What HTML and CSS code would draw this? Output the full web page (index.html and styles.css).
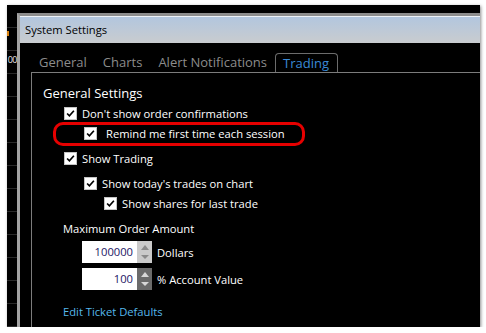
FILE: index.html
```html
<!DOCTYPE html>
<html lang="en">
<head>
    <meta charset="UTF-8">
    <title>System Settings</title>
    <link rel="stylesheet" href="styles.css">
</head>
<body>
    <div class="shot">
        <div class="app">
            <span class="app-mark"></span>
            <span class="app-num">00</span>
        </div>
        <div class="dialog">
            <div class="titlebar">System Settings</div>
            <div class="dialog-body">
                <div class="tabs">
                    <span class="tab">General</span>
                    <span class="tab">Charts</span>
                    <span class="tab">Alert Notifications</span>
                    <span class="tab active">Trading</span>
                </div>
                <div class="pane">
                    <div class="heading">General Settings</div>

                    <div class="row lvl0">
                        <span class="cb"><svg viewBox="0 0 13 13"><path d="M2.5 6.5 L5.2 9.2 L10.5 3.2"/></svg></span>
                        <span>Don't show order confirmations</span>
                    </div>
                    <div class="row lvl1 remind">
                        <span class="cb"><svg viewBox="0 0 13 13"><path d="M2.5 6.5 L5.2 9.2 L10.5 3.2"/></svg></span>
                        <span>Remind me first time each session</span>
                    </div>
                    <div class="row lvl0 gap">
                        <span class="cb"><svg viewBox="0 0 13 13"><path d="M2.5 6.5 L5.2 9.2 L10.5 3.2"/></svg></span>
                        <span>Show Trading</span>
                    </div>
                    <div class="row lvl1 gap">
                        <span class="cb"><svg viewBox="0 0 13 13"><path d="M2.5 6.5 L5.2 9.2 L10.5 3.2"/></svg></span>
                        <span>Show today's trades on chart</span>
                    </div>
                    <div class="row lvl2">
                        <span class="cb"><svg viewBox="0 0 13 13"><path d="M2.5 6.5 L5.2 9.2 L10.5 3.2"/></svg></span>
                        <span>Show shares for last trade</span>
                    </div>

                    <div class="label">Maximum Order Amount</div>
                    <div class="amount">
                        <span class="num-input">100000</span>
                        <span class="spin">
                            <span class="up"></span>
                            <span class="down"></span>
                        </span>
                        <span>Dollars</span>
                    </div>
                    <div class="amount second">
                        <span class="num-input">100</span>
                        <span class="spin dark">
                            <span class="up"></span>
                            <span class="down"></span>
                        </span>
                        <span>% Account Value</span>
                    </div>

                    <div class="link">Edit Ticket Defaults</div>
                </div>
            </div>
        </div>
    </div>
</body>
</html>
```

FILE: styles.css
```css
body {
    margin: 0;
    background: #fff;
    font-family: 'Open Sans', 'Noto Sans', sans-serif;
}
.shot {
    display: flex;
    width: 473px;
    height: 322px;
    margin: 5px 0 0 7px;
    background: #000;
    overflow: hidden;
    box-shadow: 1px 1px 3px rgba(0,0,0,0.45);
}

/* chart window behind the dialog */
.app {
    width: 10px;
    flex-shrink: 0;
    display: flex;
    flex-direction: column;
    align-items: flex-end;
    overflow: hidden;
    background: repeating-linear-gradient(to bottom, transparent 0 22px, #2a2a2a 22px 23px);
}
.app-mark {
    width: 2px;
    height: 5px;
    margin: 26px 8px 0 0;
    background: #d9820f;
}
.app-num {
    margin-top: 19px;
    font-size: 9px;
    line-height: 10px;
    letter-spacing: -0.5px;
    color: #e6e6e6;
}

.dialog {
    flex: 1;
    margin-top: 8px;
    border-top: 3px solid #8c8c8c;
    border-left: 3px solid #a3a3a3;
    display: flex;
    flex-direction: column;
}
.titlebar {
    height: 26px;
    line-height: 26px;
    padding-left: 5px;
    font-size: 11.2px;
    color: #000;
    background: linear-gradient(to bottom, #b2c6de, #c9cccf);
    border-top: 1px solid #eef2f6;
}
.dialog-body {
    flex: 1;
    padding: 10px 0 0 11px;
    color: #fff;
    font-size: 11.2px;
}

.tabs {
    display: flex;
    align-items: flex-end;
    border-bottom: 1px solid #7c7c7c;
}
.tab {
    height: 19px;
    line-height: 19px;
    padding: 0 8px;
    font-size: 13px;
    color: #8c8c8c;
    box-sizing: border-box;
}
.tab.active {
    color: #3a8ad6;
    border: 1px solid #6c6c6c;
    border-bottom: none;
    border-radius: 4px 4px 0 0;
    padding: 0 8px 0 7px;
    line-height: 18px;
}

.pane {
    border-left: 1px solid #7c7c7c;
    padding-top: 10px;
    height: 100%;
}
.heading {
    height: 20px;
    line-height: 20px;
    margin-left: 11px;
    font-size: 13px;
}

.row {
    display: flex;
    align-items: center;
    gap: 5px;
    height: 20px;
}
.row.gap {
    margin-top: 5px;
}
.lvl0 { margin-left: 32px; }
.lvl1 { margin-left: 52px; }
.lvl2 { margin-left: 72px; }

.cb {
    width: 13px;
    height: 13px;
    box-sizing: border-box;
    background: #fff;
    border: 1px solid #c4c4c4;
    display: flex;
}
.cb svg {
    width: 11px;
    height: 11px;
    fill: none;
    stroke: #000;
    stroke-width: 2;
}

/* red highlight drawn over the screenshot */
.remind {
    position: relative;
    gap: 9px;
}
.remind::after {
    content: "";
    position: absolute;
    left: -31px;
    top: -1px;
    width: 246px;
    height: 18px;
    border: 3px solid #e60000;
    border-radius: 10px;
}

.label {
    margin: 6px 0 0 31px;
    height: 20px;
    line-height: 20px;
}
.amount {
    display: flex;
    align-items: center;
    margin: 2px 0 0 50px;
    height: 22px;
}
.amount.second {
    margin-top: 5px;
}
.num-input {
    width: 55px;
    height: 22px;
    box-sizing: border-box;
    padding-right: 4px;
    background: #fff;
    color: #1c1464;
    text-align: right;
    line-height: 22px;
}
.spin {
    width: 15px;
    height: 22px;
    margin-right: 5px;
    background: #cacaca;
    display: flex;
    flex-direction: column;
    align-items: center;
    justify-content: space-evenly;
}
.spin .up {
    width: 0;
    height: 0;
    border-left: 4px solid transparent;
    border-right: 4px solid transparent;
    border-bottom: 5px solid #8a8a8a;
}
.spin .down {
    width: 0;
    height: 0;
    border-left: 4px solid transparent;
    border-right: 4px solid transparent;
    border-top: 4px solid #8a8a8a;
}
.spin.dark {
    background: #6b6b6b;
}
.spin.dark .up {
    border-bottom-color: #d8d8d8;
}
.spin.dark .down {
    border-top-color: #d8d8d8;
}

.link {
    margin: 12px 0 0 31px;
    height: 20px;
    line-height: 20px;
    color: #56b8ec;
}
```
